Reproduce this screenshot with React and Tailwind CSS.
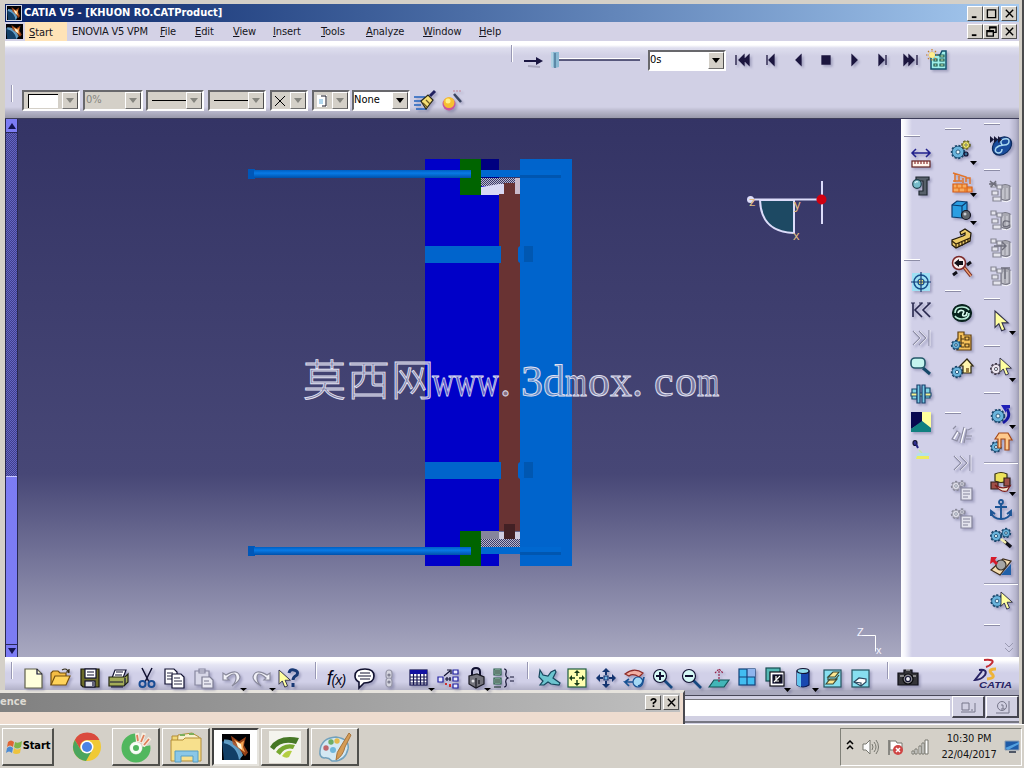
import React from 'react';
import { clsx } from 'clsx';

const menuItems = [
  { label: 'ENOVIA V5 VPM', width: 'w-[88px]', plain: true },
  { label: 'File', width: 'w-[35px]' },
  { label: 'Edit', width: 'w-[38px]' },
  { label: 'View', width: 'w-10' },
  { label: 'Insert', width: 'w-12' },
  { label: 'Tools', width: 'w-[45px]' },
  { label: 'Analyze', width: 'w-[57px]' },
  { label: 'Window', width: 'w-14' },
  { label: 'Help', width: 'w-8' },
];

/* ---------- Small drawing helpers ---------- */

const Icon = ({ children, flat, arrow }) => (
  <svg
    viewBox="0 0 28 28"
    className={clsx('w-7 h-7 shrink-0 overflow-visible', !flat && 'drop-shadow-[2px_2px_1px_rgba(60,60,110,0.3)]')}
    fill="none"
    stroke="#101030"
    strokeWidth="1.2"
  >
    {children}
    {arrow && <path d={arrow === 'low' ? 'M22 24h7l-3.5 3z' : 'M22 24h7l-3.5 4z'} fill="#000" stroke="none" />}
  </svg>
);

const Gear = ({ x, y, r, fill = '#6ab4dc', ink = '#17456a' }) => (
  <g>
    <circle cx={x} cy={y} r={r} stroke={ink} strokeWidth="2.4" strokeDasharray="2 1.5" fill={fill} />
    <circle cx={x} cy={y} r={r - 0.2} fill={fill} stroke={ink} strokeWidth="0.7" />
    <circle cx={x} cy={y} r={r / 3} fill="#e6f4fa" stroke={ink} strokeWidth="0.8" />
  </g>
);

const Cursor = ({ x, y, s = 1 }) => (
  <path
    transform={`translate(${x} ${y}) scale(${s})`}
    d="M0 0v15l3.5-3.5L6 18l3-1.2-2.6-6H12z"
    fill="#ffffa0"
    stroke="#30304a"
    strokeWidth="1"
  />
);

const Box = ({ x, y, w, h, fill, ...rest }) => <rect x={x} y={y} width={w} height={h} fill={fill} {...rest} />;

const Earth = ({ className }) => (
  <svg viewBox="0 0 28 28" className={className} preserveAspectRatio="none">
    <rect width="28" height="28" fill="#020205" />
    <path d="M0 8Q14 6 19 28H2z" fill="#123f66" />
    <path d="M2 6Q15 5 21 23L17 28Q15 13 2 10z" fill="#6fb0da" opacity="0.85" />
    <path d="M9 2l8 6 7-5-2 9 4 8-3 4-6-8-6-5z" fill="#b8501c" opacity="0.8" />
    <path d="M12 6l6 4 4-3-1 7 2 6-6-5z" fill="#f5a452" />
    <path d="M14 8l5 3 1 6-4-3z" fill="#fff6d8" />
  </svg>
);

/* ---------- Icons: measure / simulation column ---------- */

const columnOne = [
  { gap: 'h-[25px]' },
  <Icon key="measure">
    <path d="M5 9h18M9 5L5 9l4 4M19 5l4 4-4 4" stroke="#20208c" strokeWidth="1.5" />
    <Box x="5" y="17" w="18" h="6" fill="#fff4ec" stroke="#602020" />
    <path d="M8 17v3M11 17v3M14 17v3M17 17v3M20 17v3" stroke="#8a3030" />
  </Icon>,
  <Icon key="caliper">
    <path d="M9 5h13v3h-2v15h-8v-4h4V9H9z" fill="#57606a" stroke="#202830" />
    <circle cx="10" cy="12" r="4.3" fill="#78bccb" stroke="#20404c" />
    <path d="M8 11q1-2 3-1" stroke="#e0f6fa" />
  </Icon>,
  { gap: 'h-[68px]' },
  <Icon key="target">
    <Box x="5" y="5" w="18" h="18" fill="#9fe0f4" stroke="none" />
    <circle cx="14" cy="14" r="7" stroke="#18508c" strokeWidth="1.5" />
    <circle cx="14" cy="14" r="3" stroke="#18508c" fill="#fff27a" />
    <path d="M14 4v20M4 14h20" stroke="#143870" />
  </Icon>,
  <Icon key="first">
    <path d="M6 7v14M15 7l-7 7 7 7M23 7l-7 7 7 7" stroke="#26264c" strokeWidth="1.6" />
    <path d="M4 7h4M12 7h4M20 7h4" stroke="#26264c" />
  </Icon>,
  <Icon key="last">
    <path d="M6 7l7 7-7 7M12 7l7 7-7 7M22 6v16" stroke="#8d8da6" strokeWidth="1.3" />
    <path d="M7 7l7 7-7 7M13 7l7 7-7 7M23 6v16" stroke="#fff" strokeWidth="0.6" />
  </Icon>,
  <Icon key="magnify">
    <path d="M16 16l7 6" stroke="#154868" strokeWidth="3" />
    <rect x="4" y="6" width="14" height="10" rx="4" fill="#c4f4ee" stroke="#24586a" strokeWidth="1.6" />
  </Icon>,
  <Icon key="section">
    <path d="M5 9h5v10H5zM18 8h5v10h-5z" fill="#80d4e4" stroke="#164a6c" />
    <path d="M4 13h20v3H4z" fill="#f5f38e" stroke="#245078" />
    <path d="M10 5h3v18h-3zM15 5h3v18h-3z" fill="#79c9e4" stroke="#17406c" />
  </Icon>,
  <Icon key="colors">
    <path d="M4 4h11v10L4 21z" fill="#080850" stroke="none" />
    <path d="M15 4h9v16l-9-7z" fill="#ffff9c" stroke="none" />
    <path d="M4 21l11-8 9 7v4H4z" fill="#108080" stroke="none" />
  </Icon>,
  <Icon key="light" flat>
    <ellipse cx="8" cy="7" rx="2" ry="2.500" fill="#303090" />
    <path d="M9 8l2 4" stroke="#202080" strokeWidth="2" />
    <path d="M12 14l3 3" stroke="#c6e8a0" />
    <path d="M11 17h12l-3 5H8z" fill="#b4e0ec" stroke="none" />
    <path d="M10 20h12v3H9z" fill="#ecec62" stroke="none" />
  </Icon>,
];

/* ---------- Icons: assembly column ---------- */

const GreyGears = () => (
  <g>
    <Gear x="8" y="9" r="4" fill="#dcdce6" ink="#8a8a9a" />
    <Gear x="14" y="7" r="2.500" fill="#dcdce6" ink="#8a8a9a" />
    <path d="M13 11h11v12H13z" fill="#e4e4ee" stroke="#84849a" />
    <path d="M15 14h7M15 17h7M15 20h5" stroke="#84849a" />
  </g>
);

const columnTwo = [
  { gap: 'h-[18px]' },
  <Icon key="constraint" arrow>
    <Gear x="10" y="15" r="6" />
    <Gear x="18" y="8" r="3.600" fill="#f6ef70" ink="#5d5a20" />
    <circle cx="18" cy="17" r="2" fill="#386c94" />
  </Icon>,
  { gap: 'h-1', bare: true },
  <Icon key="bricks" arrow>
    <path d="M5 15h14v8H5zM19 18h5v5h-5z" fill="#f6ab60" stroke="#d65a14" />
    <path d="M5 19h19M9 15v4M14 15v4M11 19v4M17 19v4" stroke="#e2701c" />
    <path d="M5 4l13 4v5M7 5v8M11 7v5M15 9v5M5 12h9M18 9h4v6" stroke="#e2742a" strokeWidth="1.500" />
  </Icon>,
  <Icon key="cube" arrow>
    <path d="M4 8l5-4 10 1v13l-5 3-10-1z" fill="#2b9ee2" stroke="#0c3c70" />
    <path d="M4 8l10 1v12M14 9l5-4" stroke="#0c3c70" />
    <circle cx="18" cy="18" r="4.500" fill="#60666c" stroke="#151520" />
    <circle cx="17" cy="17" r="1.500" fill="#c8ccd2" stroke="none" />
  </Icon>,
  <Icon key="clamp">
    <path d="M12 7l5-3 6 4-1 8-14 7-4-3v-5l11-4 2-1v-2l-4 2z" fill="#ecca68" stroke="#201808" />
    <path d="M4 16l4 3v4M8 19l14-6M11 18v4M14 17v4M17 15v4M20 14v3" stroke="#302008" />
  </Icon>,
  <Icon key="analyse">
    <path d="M15 13l8 10" stroke="#7c2c20" strokeWidth="3.500" />
    <path d="M15 13l8 10" stroke="#f0a070" strokeWidth="1.300" />
    <circle cx="11" cy="10" r="6.500" fill="#f8ecec" stroke="#7b2828" strokeWidth="1.500" />
    <path d="M6 10l5-4v2h4v4h-4v2z" fill="#101018" stroke="none" />
    <path d="M5 22l4-3M19 12l4-3" stroke="#101018" strokeWidth="3" />
  </Icon>,
  { gap: 'h-[18px]' },
  <Icon key="swirl">
    <ellipse cx="14" cy="14" rx="9.500" ry="8.500" fill="#08241e" stroke="#08201c" />
    <path d="M7 14q0-6 7-6 5 0 7 3" stroke="#b9ecd8" strokeWidth="1.700" />
    <path d="M21 14q0 6-7 6-5 0-7-3" stroke="#b9ecd8" strokeWidth="1.700" />
    <path d="M10 14q1-3 4-2.500t1 3q-1 2.500 1 2.500 3 0 3-4" stroke="#d9fbee" strokeWidth="1.700" />
  </Icon>,
  <Icon key="tree-gear">
    <path d="M10 5h6v3h7v15H9V12h1z" fill="#f4c05a" stroke="#614010" />
    <path d="M13 8v12M13 12h3M13 16h3M13 20h3M17 10h4v3h-4zM17 17h4v3h-4z" stroke="#4d3510" />
    <Gear x="8" y="18" r="4" />
  </Icon>,
  <Icon key="home-gear">
    <Gear x="9" y="17" r="5" />
    <path d="M12 11l7-7 6 7h-2v7h-8v-7z" fill="#fff4ae" stroke="#302810" />
    <path d="M18 13h3v5h-3z" fill="#9a7d40" stroke="none" />
  </Icon>,
  { gap: 'h-[38px]' },
  <Icon key="scene-off">
    <path d="M4 18l5-8 3 3-3 7zM12 22l4-16M19 8l-3 14M20 9l4-2M18 15h6M18 18h5M5 8l3-3" stroke="#8d8da2" />
    <path d="M13 22l4-15M6 18l4-7" stroke="#fff" />
  </Icon>,
  <Icon key="end-off">
    <path d="M6 7l7 7-7 7M12 7l7 7-7 7M22 6v16" stroke="#8d8da6" strokeWidth="1.3" />
    <path d="M7 7l7 7-7 7M13 7l7 7-7 7M23 6v16" stroke="#fff" strokeWidth="0.6" />
  </Icon>,
  <Icon key="report-off"><GreyGears /></Icon>,
  <Icon key="report2-off"><GreyGears /></Icon>,
];

/* ---------- Icons: workbench column ---------- */

const GreyDrum = ({ mark }) => (
  <Icon flat>
    <path d="M14 8q4-3 9 0v13q-4 3-9 0z" fill="#a9a9b2" stroke="#7b7b88" />
    <path d="M16 10v11M20 10v11" stroke="#d4d4dc" />
    <path d="M4 5h5v4H4zM10 7h5v4h-5zM5 13h6v4H5zM6 19h8v4H6z" fill="#e4e4ec" stroke="#868694" />
    <path d={mark} stroke="#6f6f7c" strokeWidth="1.400" />
    <path d="M24 9v13q-4 3-9 1" stroke="#fff" strokeWidth="0.800" />
  </Icon>
);

const Rule = () => (
  <div className="h-px w-[34px] bg-[#9c9cb4] border-b border-white box-content" />
);

const columnThree = [
  { gap: 'h-[13px]' },
  <Icon key="dmu">
    <ellipse cx="15" cy="14" rx="10.500" ry="8" transform="rotate(-40 15 14)" fill="#1a4c9c" stroke="#0d2c60" />
    <path d="M15 13q-3-5 2-6t5 2q0 4-5 4-5 0-8 3-2 4 2 5 4 0 4-4" stroke="#a9d7f0" strokeWidth="1.500" />
    <path d="M3 4l4 3.500L3 11zM7 4l4 3.500L7 11zM11 4l4 3.500-4 3.500z" fill="#181838" stroke="none" />
  </Icon>,
  { gap: 'h-[18px]' },
  <GreyDrum key="d1" mark="M3 3l6 5M9 3L4 9M2 6h7" />,
  <GreyDrum key="d2" mark="M23 16q-7-3-7 2t7 1q2 3-4 4" />,
  <GreyDrum key="d3" mark="M7 12h12M15 8l4 4-4 4" />,
  <GreyDrum key="d4" mark="M14 6h9M18 6v11" />,
  { gap: 'h-[17px]' },
  <Icon key="select" arrow><Cursor x={8} y={4} s={1.1} /></Icon>,
  { gap: 'h-[19px]' },
  <Icon key="gear-select" arrow>
    <Gear x="9" y="15" r="4.800" fill="#ece6f0" ink="#403848" />
    <Cursor x={13} y={4} s={0.95} />
  </Icon>,
  { gap: 'h-[19px]' },
  <Icon key="update" arrow>
    <Gear x="11" y="15" r="6" />
    <path d="M20 8q5 8-4 14" stroke="#1616a0" strokeWidth="2.700" />
    <path d="M14 4h9v3l-4 1 0 4z" fill="#2020b8" stroke="none" />
  </Icon>,
  <Icon key="publish">
    <Gear x="9" y="18" r="4.600" />
    <path d="M8 10l4-6 9 0 4 7h-3v10h-4V10h-4v9h-3v-9z" fill="#ffc98c" stroke="#a44818" />
  </Icon>,
  { rule: true, gap: 'h-[11px]' },
  <Icon key="component" arrow>
    <path d="M8 6q6-3 12 0v7q-6 3-12 0z" fill="#ece25a" stroke="#342e10" />
    <path d="M4 14h7v7H4zM17 10h6v8h-6z" fill="#9e5048" stroke="#33201c" />
    <path d="M8 17q7 5 15 1l-3 5q-6 2-12-6z" fill="#f8e8d0" stroke="#7d1c1c" />
  </Icon>,
  <Icon key="anchor">
    <circle cx="14" cy="6" r="2" stroke="#1d5596" strokeWidth="1.800" />
    <path d="M14 8v15M8 11h12M4 16q2 7 10 7t10-7M4 20v-5l4 3M24 20v-5l-4 3" stroke="#1d5596" strokeWidth="1.900" />
  </Icon>,
  <Icon key="gears-pin">
    <Gear x="9" y="12" r="4.800" />
    <Gear x="19" y="9" r="4" />
    <path d="M17 17l7 6" stroke="#101018" strokeWidth="3.500" />
    <path d="M14 15l5 4" stroke="#f4efb0" strokeWidth="2.400" />
  </Icon>,
  <Icon key="replace">
    <path d="M4 18l12-11 8 2-11 14z" fill="#f4dcb0" stroke="#3c2c18" />
    <circle cx="14" cy="13" r="5" fill="#a5a5a5" stroke="#39332c" />
    <path d="M24 12v11H14z" fill="#2060a8" stroke="none" />
    <path d="M4 5h6l-2 3 3 3-2 2-3-3-3 2z" fill="#d61a2a" stroke="none" />
  </Icon>,
  { rule: true, gap: 'h-[7px]' },
  <Icon key="gear-cursor">
    <Gear x="10" y="14" r="5.500" />
    <Cursor x={14} y={5} s={0.95} />
  </Icon>,
  { gap: 'h-[18px]' },
  <svg key="more" viewBox="0 0 14 14" className="w-[14px] h-[14px] ml-4 mt-2 shrink-0" fill="none" stroke="#9a9ab2">
    <path d="M3 2l4 4 4-4M3 7l4 4 4-4" />
  </svg>,
];

/* ---------- Icons: standard toolbar ---------- */

const View = ({ children }) => (
  <Icon>
    <Box x="5" y="6" w="17" h="17" fill="#87dff0" stroke="#245460" />
    {children}
  </Icon>
);

const standardIcons = [
  <Icon key="new"><path d="M6 5h12l5 5v14H6z" fill="#ffffdc" stroke="#60604c" /><path d="M18 5v5h5" /></Icon>,
  <Icon key="open">
    <path d="M4 21V9l2-2h5l2 2h6v4" fill="#f4bc44" stroke="#745010" />
    <path d="M4 21l4-9h15l-4 9z" fill="#ffd35a" stroke="#745010" />
    <path d="M15 6q5-3 7 3M19 8h3V5" stroke="#302810" />
  </Icon>,
  <Icon key="save">
    <path d="M5 5h18v18H7l-2-2z" fill="#6c6b28" stroke="#18180c" />
    <Box x="9" y="5" w="11" h="9" fill="#fff" />
    <Box x="9" y="17" w="10" h="6" fill="#e0e0e8" />
    <path d="M11 8h7M11 11h7M17 18v4" />
  </Icon>,
  <Icon key="print">
    <path d="M11 6h11l-3 8H8z" fill="#fff" />
    <path d="M5 13h16l3-3v8l-4 4H5z" fill="#a3ab58" stroke="#202410" />
    <path d="M12 8h7M11 11h7M6 18h13M21 14v7M7 23h12" />
  </Icon>,
  <Icon key="cut">
    <path d="M9 4l7 14M19 4l-7 14" strokeWidth="1.500" />
    <circle cx="9.500" cy="20" r="3" stroke="#184c94" strokeWidth="2" />
    <circle cx="18.500" cy="20" r="3" stroke="#184c94" strokeWidth="2" />
  </Icon>,
  <Icon key="copy">
    <path d="M4 5h9l3 3v12H4z" fill="#fff" />
    <path d="M6 9h6M6 12h5M6 15h5" strokeWidth="0.900" />
    <path d="M11 10h9l3 3v11H11z" fill="#fff" />
    <path d="M13 14h6M13 17h8M13 20h8" strokeWidth="0.900" />
  </Icon>,
  <Icon key="paste">
    <path d="M5 7h14v14H5zM9 5h6v4H9z" stroke="#8888a0" fill="#d8d8e8" />
    <path d="M12 13h8l3 3v8H12z" fill="#e9e9f2" stroke="#7c7c92" />
    <path d="M14 17h5M14 20h7" stroke="#7c7c92" />
  </Icon>,
  <Icon key="undo" arrow="low">
    <path d="M5 9v7h6l-2-2q9-8 9 0 0 4-4 8 8-5 8-9-2-9-14-2z" fill="#f2f2f8" stroke="#8a8a9c" />
  </Icon>,
  <Icon key="redo" arrow="low">
    <path d="M23 9v7h-6l2-2q-9-8-9 0 0 4 4 8-8-5-8-9 2-9 14-2z" fill="#f2f2f8" stroke="#8a8a9c" />
  </Icon>,
  <Icon key="what">
    <Cursor x={4} y={6} s={0.95} />
    <path d="M14 9q1-4 5-3 5 1 3 5-4 2-4 5M18 19v4" stroke="#183874" strokeWidth="3" />
  </Icon>,
];

const knowledgeIcons = [
  <span key="fx" className="w-7 shrink-0 text-center font-['Liberation_Sans',sans-serif] italic tracking-tighter text-[#08081c]">
    <span className="text-[20px]">f</span><span className="text-[14px]">(x)</span>
  </span>,
  <Icon key="comment">
    <path d="M5 12q0-7 10-7 9 0 9 7t-10 7l-5 5v-6q-4-2-4-6z" fill="#fff" strokeWidth="1.600" />
    <path d="M10 9h10M8 12h13M10 15h10" />
  </Icon>,
  <Icon key="traffic">
    <rect x="8" y="6" width="6" height="9" rx="3" fill="#d6d6e0" stroke="#9696a8" />
    <rect x="8" y="14" width="6" height="9" rx="3" fill="#d6d6e0" stroke="#9696a8" />
    <circle cx="11" cy="11" r="1" stroke="#77778a" /><circle cx="11" cy="18" r="1" stroke="#77778a" />
  </Icon>,
  <Icon key="table" arrow="low">
    <Box x="4" y="6" w="17" h="15" fill="#fff" stroke="#141450" />
    <Box x="4" y="6" w="17" h="4" fill="#1212a0" stroke="none" />
    <path d="M7.500 10v11M11 10v11M14.500 10v11M18 10v11M4 13h17M4 16h17M4 19h17" stroke="#141450" />
  </Icon>,
  <Icon key="links">
    <path d="M4 13h5v5H4zM19 6h5v4h-5zM19 13h5v4h-5zM19 20h5v4h-5z" stroke="#2020a0" fill="#ececff" />
    <path d="M10 12l6-5M13 6h4v4M11 15h6M13 13v4M16 13v4" />
    <path d="M12 19v2M16 20v3" stroke="#d03030" strokeWidth="2" />
  </Icon>,
  <Icon key="lock" arrow="low">
    <path d="M10 12V8q0-4 4-4t4 4v4" strokeWidth="2" />
    <path d="M7 12l8-2 7 3v7l-8 4-7-4z" fill="#74747c" stroke="#181820" />
    <path d="M14 14v10M17 16v4" stroke="#181820" /><circle cx="11" cy="17" r="1.500" fill="#e0e0e4" stroke="none" />
  </Icon>,
  <Icon key="equiv">
    <path d="M4 5h7v6H4zM4 14h7v6H4z" fill="#b6d6c8" stroke="#285c48" />
    <path d="M5 7h5M5 9h5M5 16h5M5 18h5M4 23h7" stroke="#102820" />
    <path d="M14 5q3 0 2 4t2 5q-3 1-2 5t-2 4M20 13h4M20 17h4" />
  </Icon>,
];

const viewIcons = [
  <Icon key="fly">
    <path d="M5 6l3 5 5 1 3-4 4-2 1 2-3 6 7 5-1 2-8-1-3-2-4 3-4 0 3-4-4-4z" fill="#6cc4cf" stroke="#15465c" />
  </Icon>,
  <Icon key="fit">
    <Box x="5" y="5" w="18" h="18" fill="#ffffb0" stroke="#1e5c40" />
    <path d="M14 7v5M14 16v5M7 14h5M16 14h5" stroke="#18401c" strokeWidth="1.500" />
    <path d="M14 6l-3 3h6zM14 22l-3-3h6zM6 14l3-3v6zM22 14l-3-3v6z" fill="#183c18" stroke="none" />
  </Icon>,
  <Icon key="pan">
    <path d="M14 6v5M14 17v5M6 14h5M17 14h5" stroke="#143470" strokeWidth="2" />
    <path d="M12 12h4v4h-4z" stroke="#143470" fill="#78b4e4" />
    <path d="M14 4l-4 4h8zM14 24l-4-4h8zM4 14l4-4v8zM24 14l-4-4v8z" fill="#143470" stroke="none" />
  </Icon>,
  <Icon key="rotate">
    <path d="M5 10q9-7 18-1l-4 4q-6-4-10-1z" fill="#f3afa2" stroke="#8e2c28" />
    <circle cx="18" cy="18" r="5" fill="#a4d8f4" stroke="#185294" />
    <path d="M13 18H5l4 4M5 18l4-3M18 22q5-1 6-9" stroke="#185294" strokeWidth="1.700" />
  </Icon>,
  <Icon key="zoomin">
    <path d="M16 16l8 8" stroke="#164880" strokeWidth="2.700" />
    <circle cx="12" cy="12" r="6.500" fill="#d6faf6" /><path d="M8 12h8M12 8v8" strokeWidth="2" />
  </Icon>,
  <Icon key="zoomout">
    <path d="M16 16l8 8" stroke="#164880" strokeWidth="2.700" />
    <circle cx="12" cy="12" r="6.500" fill="#d6faf6" /><path d="M8 12h8" strokeWidth="2" />
  </Icon>,
  <Icon key="normal">
    <path d="M4 23l5-7h15l-5 7z" fill="#42b6b8" stroke="#135456" />
    <path d="M14 18V6M10 9l4-4 4 4" stroke="#94244a" strokeDasharray="2 1" />
  </Icon>,
  <Icon key="multi">
    <Box x="5" y="5" w="16" h="16" fill="#42bdf1" stroke="#15427b" />
    <path d="M13 5h8v8h-8z" fill="#8fb4ed" stroke="none" /><path d="M13 5v16M5 13h16" stroke="#15427b" />
  </Icon>,
  <Icon key="quick" arrow>
    <Box x="4" y="4" w="14" h="13" fill="#54b8b4" stroke="#174c50" />
    <Box x="8" y="8" w="14" h="14" fill="#fff" stroke="#101018" />
    <Box x="11" y="11" w="9" h="8" fill="#101018" /><path d="M12 18l6-6M14 12v5M17 17h-4" stroke="#fff" />
  </Icon>,
  <Icon key="shade" arrow>
    <path d="M7 7v14q6 4 12 0V7z" fill="#1848b0" stroke="#0b1b52" />
    <path d="M7 7v14q3 2 4 2V8z" fill="#64c5ed" stroke="none" />
    <ellipse cx="13" cy="7" rx="6" ry="2.500" fill="#90ddec" />
  </Icon>,
  <View key="hide">
    <path d="M9 13l5-5h6l-4 5zM7 20l4-5h7l-4 5z" fill="#ffe791" stroke="#3c4730" />
    <path d="M9 13v3h7l4-5" stroke="#3c4730" />
  </View>,
  <View key="swap">
    <path d="M7 18l5-4 7 1v3l-5 4z" fill="#fff" stroke="#2b4860" />
    <path d="M7 18l7 1v3" stroke="#2b4860" />
  </View>,
];

const playback = [
  ['first', 'M8 9v10M16 9l-5 5 5 5zM21 9l-5 5 5 5z'],
  ['previous', 'M11 9v10M18 9l-5 5 5 5z'],
  ['back', 'M17 9l-5 5 5 5z'],
  ['stop', 'M10 10h8v8h-8z'],
  ['play', 'M12 9l5 5-5 5z'],
  ['next', 'M11 9l5 5-5 5zM18 9v10'],
  ['final', 'M8 9l5 5-5 5zM13 9l5 5-5 5zM21 9v10'],
];

/* ---------- Window chrome ---------- */

const SmallButton = ({ children }) => (
  <div className="w-4 h-[15px] shrink-0 bg-[#d4d0c8] border border-t-white border-l-white border-r-[#505050] border-b-[#505050] flex items-center justify-center">
    <svg viewBox="0 0 12 12" className="w-[11px] h-[11px]" fill="none" stroke="#000" strokeWidth="1.500">{children}</svg>
  </div>
);

const Grip = ({ className }) => (
  <div className={clsx('w-[2px] h-[17px] shrink-0 bg-[#9898b4] border-r border-white', className)} />
);

const Combo = ({ className, children, light }) => (
  <div
    className={clsx(
      'h-[21px] shrink-0 flex items-stretch border-2 border-t-[#68686c] border-l-[#68686c] border-r-white border-b-white',
      light ? 'bg-white' : 'bg-[#d4d0c8]',
      className
    )}
  >
    <div className="flex-1 min-w-0 flex items-center">{children}</div>
    <div className="w-4 bg-[#d4d0c8] border border-t-white border-l-white border-b-[#707070] border-r-[#505050] flex items-center justify-center">
      <svg viewBox="0 0 8 5" className="w-2 h-[5px]"><path d="M0 0h8L4 5z" fill={light ? '#000' : '#85857f'} /></svg>
    </div>
  </div>
);

const TitleBar = () => (
  <div className="h-[18px] shrink-0 flex items-center px-px bg-linear-to-r from-[#0b2469] to-[#a6caf0]">
    <Earth className="w-4 h-4 border border-white/80" />
    <span className="ml-[2px] flex-1 whitespace-nowrap text-white font-bold text-[11px]">
      CATIA V5 - [KHUON RO.CATProduct]
    </span>
    <SmallButton><path d="M2 10h5" strokeWidth="2" /></SmallButton>
    <SmallButton><path d="M1.500 2v8.500h9V2zM1 2h10" /></SmallButton>
    <div className="w-[2px]" />
    <SmallButton><path d="M2 2l8 8M10 2l-8 8" /></SmallButton>
    <div className="w-px" />
  </div>
);

const MenuBar = () => (
  <div className="h-[19px] shrink-0 flex items-center px-px bg-[#d4d2e6] text-[11px] tracking-[-0.1px] text-[#151520]">
    <Earth className="w-[17px] h-[15px]" />
    <div className="ml-[2px] w-[42px] h-full bg-[#ffe3b7] pl-1 pt-px leading-[19px]"><u>S</u>tart</div>
    <div className="w-[5px]" />
    {menuItems.map((item) => (
      <div key={item.label} className={clsx('shrink-0 whitespace-nowrap pt-[2px]', item.width)}>
        {item.plain ? <span className="tracking-[-0.2px]">{item.label}</span> : <><u>{item.label[0]}</u>{item.label.slice(1)}</>}
      </div>
    ))}
    <div className="flex-1" />
    <SmallButton><path d="M2 10h5" strokeWidth="2" /></SmallButton>
    <SmallButton><path d="M4 4V1h7v6H8M1 5h7v6H1zM4 2h7M1 6h7" /></SmallButton>
    <div className="w-[2px]" />
    <SmallButton><path d="M2 2l8 8M10 2l-8 8" /></SmallButton>
    <div className="w-px" />
  </div>
);

const TopToolbars = () => (
  <div className="h-[78px] shrink-0 flex flex-col border-b border-[#3c3c58] bg-[linear-gradient(to_bottom,#fff_0,#fff_4px,#dedeee_7px,#d1d0e5_15px,#d1d0e5_66px,#b9b8cc_70px,#9999aa_77px)]">
    {/* Simulation player */}
    <div className="h-[38px] shrink-0 flex items-center pl-[506px]">
      <Grip className="mb-[14px]" />
      <svg viewBox="0 0 130 28" className="w-[130px] h-7 ml-[10px] shrink-0" fill="none">
        <path d="M1 15h14" stroke="#1b1742" strokeWidth="2" /><path d="M13 11l7 4-7 4z" fill="#1b1742" />
        <path d="M5 20l12 1" stroke="#aaa9bf" strokeWidth="2" />
        <path d="M35 13h82" stroke="#fff" strokeWidth="2" /><path d="M35 14h82" stroke="#2e2f58" strokeWidth="1.500" />
        <path d="M28 6h8v15l-4 1-4-1z" fill="#8ab9d3" /><path d="M32 7v15" stroke="#315b7c" /><path d="M29 6v15" stroke="#d7ebf4" />
      </svg>
      <Combo className="w-[78px] -ml-[5px]" light><span className="text-[11px]">0s</span></Combo>
      <div className="w-[2px]" />
      {playback.map(([name, d]) => (
        <Icon key={name}><path d={d} fill="#1c163f" stroke="#1c163f" strokeWidth="1.300" /></Icon>
      ))}
      <Icon>
        <path d="M7 9h9l2-4h4v18H7z" fill="#9eefe9" stroke="#12516d" strokeWidth="1.500" />
        <path d="M10 13h3v2h-3zM16 9h4v2h-4zM16 13h4v2h-4zM10 18h3v2h-3zM16 18h4v2h-4z" fill="#e2ffc0" stroke="#1a5a54" />
        <path d="M8 3v12M2 9h12M4 5l8 8M12 5l-8 8" stroke="#c57c24" strokeDasharray="1.500 1" />
        <circle cx="8" cy="9" r="3" fill="#ffee8c" stroke="none" />
      </Icon>
    </div>
    {/* Graphic properties */}
    <div className="h-[38px] shrink-0 flex items-start pt-[11px] pl-[6px]">
      <Grip className="-mt-[5px]" />
      <div className="w-[9px]" />
      <Combo className="w-[58px]"><div className="ml-1 w-[30px] h-[14px] bg-white border-t border-l border-black" /></Combo>
      <Combo className="w-[60px] ml-[3px]"><span className="pl-px text-[11px] text-[#85857f]">0%</span></Combo>
      <Combo className="w-[58px] ml-[3px]"><div className="ml-1 w-[34px] h-px bg-black" /></Combo>
      <Combo className="w-[58px] ml-1"><div className="ml-1 w-[34px] h-px bg-black" /></Combo>
      <Combo className="w-[38px] ml-1">
        <svg viewBox="0 0 12 12" className="w-3 h-3 ml-[2px]"><path d="M1 1l10 10M11 1L1 11" stroke="#000" /></svg>
      </Combo>
      <Combo className="w-[38px] ml-1">
        <svg viewBox="0 0 12 12" className="w-3 h-3 ml-[3px]">
          <rect width="10" height="12" fill="#fff" /><path d="M4 1h5v10H5" fill="none" stroke="#151520" /><path d="M2 4h4v5H2z" fill="#b2d7ed" />
        </svg>
      </Combo>
      <Combo className="w-[58px] ml-[2px]" light><span className="text-[11px]">None</span></Combo>
      <div className="flex -mt-[3px] ml-[2px]">
        <Icon>
          <path d="M2 10h11M2 14h9M2 18h7M4 22h11" stroke="#2162be" strokeWidth="1.400" />
          <path d="M9 14l7-6 5 5-7 9z" fill="#f6df75" stroke="#292818" />
          <path d="M11 16l4 4M14 13l4 4" stroke="#6b5920" /><path d="M18 9l5-5" stroke="#212160" strokeWidth="3" />
        </Icon>
        <Icon>
          <circle cx="9" cy="17" r="6.500" fill="#cb559b" stroke="none" /><circle cx="9" cy="15.500" r="5.500" fill="#f6bf32" stroke="none" />
          <circle cx="8" cy="14" r="2.500" fill="#fff08a" stroke="none" />
          <path d="M14 7l7 8" stroke="#384360" strokeWidth="2.500" /><path d="M13 4h8" stroke="#c48495" strokeDasharray="2 1" />
        </Icon>
      </div>
    </div>
  </div>
);

const ScrollTrack = () => (
  <div className="w-[13px] shrink-0 flex flex-col border-x border-[#282850] bg-[#7c7cf4]">
    <div className="h-[14px] border-b border-[#282858] flex items-center justify-center">
      <svg viewBox="0 0 8 8" className="w-2 h-2"><path d="M0 7h8L4 1z" fill="#141450" /></svg>
    </div>
    <div className="h-[343px] bg-[repeating-conic-gradient(#6464c4_0_25%,#40408a_0_50%)] bg-[length:2px_2px]" />
    <div className="flex-1 border-t border-[#c8c8ff]" />
    <div className="h-[13px] border-t border-[#282858] flex items-center justify-center">
      <svg viewBox="0 0 8 8" className="w-2 h-2"><path d="M0 1h8L4 7z" fill="#141450" /></svg>
    </div>
  </div>
);

const Rod = ({ y }) => (
  <g>
    <rect x="248" y={y - 5} width="7" height="10" fill="#0057b8" />
    <rect x="254" y={y - 4} width="217" height="8" fill="url(#rod)" />
    <rect x="481" y={y - 4} width="80" height="7" fill="#0068d0" />
    <rect x="520" y={y + 1} width="41" height="3" fill="#0056b0" />
  </g>
);

const Viewport = () => (
  <svg viewBox="18 119 883 538" className="w-[883px] h-[538px] shrink-0">
    <defs>
      <linearGradient id="backdrop" x1="0" y1="0" x2="0" y2="1">
        <stop offset="0" stopColor="#343465" />
        <stop offset="0.66" stopColor="#474776" />
        <stop offset="1" stopColor="#a9a9c1" />
      </linearGradient>
      <linearGradient id="rod" x1="0" y1="0" x2="0" y2="1">
        <stop offset="0" stopColor="#005fc2" /><stop offset="0.4" stopColor="#087ae6" /><stop offset="1" stopColor="#0050aa" />
      </linearGradient>
      <pattern id="dither" width="2" height="2" patternUnits="userSpaceOnUse">
        <rect width="2" height="2" fill="#b9b9ce" /><rect width="1" height="1" fill="#3b3868" /><rect x="1" y="1" width="1" height="1" fill="#3b3868" />
      </pattern>
    </defs>
    <rect x="18" y="119" width="883" height="538" fill="url(#backdrop)" />

    {/* Mould halves */}
    <rect x="425" y="159" width="74" height="407" fill="#0000c8" />
    <rect x="520" y="159" width="52" height="407" fill="#0064cc" />
    <rect x="481" y="159" width="18" height="20" fill="#000080" />
    <rect x="499" y="180" width="21" height="351" fill="#693333" />
    <rect x="425" y="246" width="76" height="17" fill="#0064cc" />
    <rect x="425" y="462" width="76" height="17" fill="#0064cc" />
    <rect x="518" y="246" width="6" height="17" rx="3" fill="#0064cc" />
    <rect x="518" y="462" width="6" height="17" rx="3" fill="#0064cc" />
    <rect x="524" y="246" width="9" height="16" fill="#0057b1" />
    <rect x="524" y="462" width="9" height="16" fill="#0057b1" />

    {/* Parting gap */}
    <rect x="481" y="178" width="39" height="8" fill="url(#dither)" />
    <path d="M481 187l18-3h5v10h-5v1h-18z" fill="#d8d8f4" />
    <path d="M504 183h11v5h5v8h-21v-2h5z" fill="#693333" />
    <path d="M515 178h5v16h-5z" fill="#c9bbcb" />
    <rect x="481" y="531" width="18" height="8" fill="#85859c" />
    <path d="M499 532h5v7h-5zM515 532h5v7h-5z" fill="#cfcce0" />
    <rect x="481" y="539" width="39" height="8" fill="url(#dither)" />
    <path d="M504 524h11v15h-11z" fill="#422024" />
    <rect x="460" y="159" width="21" height="36" fill="#006400" />
    <rect x="460" y="531" width="21" height="35" fill="#006400" />
    <Rod y={174} />
    <Rod y={551} />

    {/* Compass */}
    <path d="M760 200q1 32 34 33v-33z" fill="#1d4963" stroke="#dcdcfa" strokeWidth="2" />
    <path d="M750 199.500h72M822 181v43" stroke="#dcdcfa" strokeWidth="2" />
    <circle cx="750.500" cy="199.500" r="3.500" fill="#dcdcfa" />
    <circle cx="821.500" cy="199.500" r="5" fill="#cf0010" />
    <g fill="#e0bd82" fontFamily="Liberation Sans, sans-serif" fontSize="13">
      <text x="749" y="206">z</text>
      <text x="794" y="209">y</text>
      <text x="793" y="240">x</text>
    </g>

    {/* Axis triad */}
    <path d="M862 635.500h13.500v16" fill="none" stroke="#fff" />
    <g fill="#f4f4ff" fontFamily="Liberation Sans, sans-serif" fontSize="11">
      <text x="857" y="636">Z</text>
      <text x="876" y="654">x</text>
    </g>

    {/* Watermark */}
    <g fontSize="44" fontFamily="Liberation Serif, serif" fill="#a6a6c6" fillOpacity="0.55" stroke="#e2e2f2" strokeWidth="0.9">
      <text x="303" y="396" fontSize="43" fontWeight="300" letterSpacing="1" fontFamily="Noto Sans CJK SC, sans-serif">莫西网</text>
      <text transform="translate(432 396) scale(0.7 1)">www</text>
      <text x="500" y="396">.</text>
      <text x="521" y="396">3d</text>
      <text transform="translate(565 396) scale(0.64 1)">m</text>
      <text x="588" y="396">ox</text>
      <text x="632" y="396">.</text>
      <text x="654" y="396">c</text>
      <text x="675" y="396">o</text>
      <text transform="translate(697 396) scale(0.65 1)">m</text>
    </g>
  </svg>
);

const ToolColumn = ({ items, className }) => (
  <div className={clsx('w-[34px] shrink-0 flex flex-col items-center', className)}>
    {items.map((item, index) => {
      if (!item.gap) return item;
      if (item.bare) return <div key={index} className={clsx('shrink-0', item.gap)} />;
      return (
        <div key={index} className={clsx('w-full shrink-0 flex flex-col', item.gap, item.rule ? 'justify-center items-center' : 'justify-end pb-[7px]')}>
          {item.rule ? <Rule /> : <div className="h-[2px] w-4 shrink-0 bg-[#8c8ca6] border-t border-white" />}
        </div>
      );
    })}
  </div>
);

const RightPanel = () => (
  <div className="w-[118px] h-[538px] shrink-0 overflow-hidden flex bg-[linear-gradient(to_right,#fff_0,#f5f5fc_4px,#d1d0e8_11px,#d1d0e8_108px,#b5b4cc_115px,#9a99b0_118px)]">
    <ToolColumn items={columnOne} className="ml-[3px]" />
    <ToolColumn items={columnTwo} className="ml-[7px]" />
    <ToolColumn items={columnThree} className="ml-[5px]" />
  </div>
);

const BottomToolbar = () => (
  <div className="h-[33px] shrink-0 flex items-start pl-[6px] bg-[linear-gradient(to_bottom,#fff_0,#fff_3px,#e4e4f3_8px,#d1d0e8_16px,#d1d0e8_25px,#b2b1c8_33px)]">
    <Grip className="mt-[5px]" />
    <div className="w-[6px] shrink-0" />
    <div className="w-[284px] shrink-0 flex justify-between mt-[7px]">{standardIcons}</div>
    <div className="w-3 shrink-0" />
    <Grip className="mt-[5px]" />
    <div className="w-[5px] shrink-0" />
    <div className="w-[194px] shrink-0 flex justify-between items-center h-7 mt-[7px]">{knowledgeIcons}</div>
    <div className="w-[11px] shrink-0" />
    <Grip className="mt-[5px]" />
    <div className="w-[6px] shrink-0" />
    <div className="w-[340px] shrink-0 flex justify-between mt-[7px]">{viewIcons}</div>
    <div className="w-3 shrink-0" />
    <Grip className="mt-[5px]" />
    <div className="w-[5px] shrink-0" />
    <div className="mt-[7px] w-7">
      <Icon>
        <path d="M4 9h6V6h8v3h6v12H4z" fill="#343438" stroke="#101018" />
        <circle cx="14" cy="15" r="5" fill="#89898f" stroke="#08080c" /><circle cx="14" cy="15" r="2.500" fill="#ededf0" />
        <path d="M6 12h4M19 12h3M12 6h4" stroke="#ddd" />
      </Icon>
    </div>
    <svg viewBox="0 0 42 32" className="w-[42px] h-8 ml-[50px] shrink-0" fill="none">
      <path d="M12 3q11-1 8 3-2 3-6 4" stroke="#c32b34" strokeWidth="2" />
      <path d="M7 13q9-1 6 5-4 5-10 5l7-9" stroke="#292465" strokeWidth="2" />
      <path d="M24 12q-8 0-5 4 6 5-4 6" stroke="#eeb43a" strokeWidth="3" />
      <text x="7" y="31" textLength="33" lengthAdjust="spacingAndGlyphs" fill="#292465" fontFamily="Liberation Sans, sans-serif" fontSize="9" fontWeight="bold" fontStyle="italic">CATIA</text>
    </svg>
  </div>
);

const StatusRow = () => (
  <div className="h-[34px] shrink-0 flex bg-[#d1d0e2]">
    {/* Parked dialog */}
    <div className="w-[685px] shrink-0 flex flex-col bg-[#eedccf] border-t-[3px] border-[#e6e3dd] border-r-2 border-r-[#4a4a50]">
      <div className="h-[19px] mr-[3px] flex items-center bg-linear-to-r from-[#808080] to-[#c0c0c0]">
        <span className="flex-1 text-[11px] font-bold text-[#dedbd4]">ence</span>
        <SmallButton><path d="M3.500 4q0-2 2.500-2t2.500 2Q8.500 5 6 6.500V8M6 9v2" strokeWidth="1.800" /></SmallButton>
        <div className="w-[2px]" />
        <SmallButton><path d="M2 2l8 8M10 2l-8 8" /></SmallButton>
        <div className="w-px" />
      </div>
    </div>
    {/* Command line */}
    <div className="flex-1 flex flex-col">
      <div className="h-[5px] bg-[#aaaabe]" />
      <div className="h-[28px] flex border-t border-[#474758] border-b-2 border-b-[#777783]">
        <div className="w-[265px] mt-[3px] h-[17px] bg-white border-t border-[#76767c]" />
        <div className="ml-[2px] w-[33px] h-[22px] bg-[#d1d0e2] border border-t-white border-l-white border-r-2 border-b-2 border-r-[#454550] border-b-[#454550] flex items-center justify-center">
          <svg viewBox="0 0 16 14" className="w-4 h-[14px]" fill="none" stroke="#77778a"><path d="M2 3h7v7H2zM11 10h2M15 3v9H1" /></svg>
        </div>
        <div className="ml-px w-[33px] h-[22px] bg-[#d1d0e2] border border-t-white border-l-white border-r-2 border-b-2 border-r-[#454550] border-b-[#454550] flex items-center justify-center">
          <svg viewBox="0 0 16 14" className="w-4 h-[14px]" fill="none" stroke="#77778a"><circle cx="8" cy="6" r="4.500" /><path d="M7 5h2v4M7 9h4M15 1v12H2" /></svg>
        </div>
      </div>
    </div>
  </div>
);

/* ---------- Taskbar ---------- */

const TaskButton = ({ active, className, children }) => (
  <div
    className={clsx(
      'h-[38px] shrink-0 flex items-center justify-center border',
      active
        ? 'bg-white border-2 border-t-[#404040] border-l-[#404040] border-r-[#e6e4de] border-b-[#e6e4de]'
        : 'bg-[#d4d0c8] border-t-white border-l-white border-r-2 border-b-2 border-r-[#50504c] border-b-[#50504c]',
      className
    )}
  >
    {children}
  </div>
);

const Taskbar = () => (
  <div className="h-11 shrink-0 flex items-start pt-[3px] pl-[2px] bg-[#d4d0c8] border-t border-white">
    <TaskButton className="w-[52px]">
      <svg viewBox="0 0 18 18" className="w-[18px] h-[18px] shrink-0">
        <path d="M3 4q3-3 6 0L8 9q-3-3-6 0z" fill="#df6534" /><path d="M10 4q3 2 7-1l-1 6q-4 3-7 0z" fill="#7eb64a" />
        <path d="M2 10q3-3 6 0l-1 5q-3-3-6 0z" fill="#4b8ad2" /><path d="M9 10q3 3 7 0l-1 5q-4 2-7 0z" fill="#edc33e" />
      </svg>
      <span className="text-[11px] font-bold tracking-[-0.1px]">Start</span>
    </TaskButton>
    <svg viewBox="0 0 32 32" className="w-8 h-8 ml-[17px] mt-[3px] shrink-0">
      <circle cx="16" cy="16" r="14" fill="#f0c934" />
      <path d="M3.800 9A14 14 0 0 1 28.500 9H16a7 7 0 0 0-6 10.500z" fill="#da4b3f" />
      <path d="M3.800 9A14 14 0 0 0 15 30l6-10.500a7 7 0 0 1-11.500-1z" fill="#4ba55e" />
      <circle cx="16" cy="16" r="6.500" fill="#fff" /><circle cx="16" cy="16" r="5" fill="#4a84e4" />
    </svg>
    <TaskButton className="w-12 ml-[9px]">
      <svg viewBox="0 0 34 34" className="w-[34px] h-[34px]">
        <circle cx="17" cy="18" r="10.500" fill="none" stroke="#51b75e" strokeWidth="8" />
        <path d="M17 18L17 0l16 2v13z" fill="#d4d0c8" />
        <path d="M19 12l-1-9M22 13l3-10M24 16l7-8" stroke="#f6eee0" strokeWidth="4" />
        <path d="M19 11l-1-6M22 12l3-7M25 15l5-6" stroke="#df7f5b" strokeWidth="1.800" />
        <circle cx="17" cy="18" r="4.500" fill="#51b75e" stroke="#f7fff6" strokeWidth="3" />
      </svg>
    </TaskButton>
    <TaskButton className="w-12 ml-[2px]">
      <svg viewBox="0 0 34 34" className="w-[34px] h-[34px]" stroke="#b28d36">
        <path d="M3 6h10l2 3h15v21H3z" fill="#f2d878" /><path d="M9 5l14-2 7 4v12H8z" fill="#f8f0cc" />
        <path d="M2 10h12l2-2h16v23H2z" fill="#f7e08d" /><path d="M11 5h5M20 4h5" stroke="#7caf5c" strokeWidth="2" />
        <path d="M6 32V21h23v11h-5v-6H12v6z" fill="#8ac7e7" stroke="#579ec4" />
      </svg>
    </TaskButton>
    <TaskButton active className="w-[47px] ml-[2px]"><Earth className="w-7 h-[26px]" /></TaskButton>
    <TaskButton className="w-12 ml-[2px]">
      <svg viewBox="0 0 32 32" className="w-8 h-8" fill="none">
        <rect width="32" height="32" fill="#f4f4ee" />
        <path d="M1 16Q9 3 30 7L27 13Q12 9 5 19z" fill="#467725" />
        <path d="M7 21q7-10 19-7l-2 4q-8-2-13 6z" fill="#77a830" />
        <path d="M13 25q4-6 10-5l-3 6q-3 2-7-1z" fill="#b4ce42" />
      </svg>
    </TaskButton>
    <TaskButton className="w-12 ml-[2px]">
      <svg viewBox="0 0 34 34" className="w-[34px] h-[34px]">
        <path d="M2 21Q3 8 18 7q14 2 12 12-3 13-16 12-4-4-8-3-5-1-4-7z" fill="#d3e8f3" stroke="#72a1bd" strokeWidth="1.500" />
        <circle cx="8" cy="18" r="2.700" fill="#bf656a" /><circle cx="13" cy="12" r="2.700" fill="#6dad67" /><circle cx="19" cy="11" r="2.700" fill="#e3b94d" />
        <circle cx="15" cy="20" r="3" fill="#70b7db" /><path d="M18 30q0-8 5-14l8-13 2 2-6 12q-2 9-9 13z" fill="#d59c57" stroke="#a7743d" />
      </svg>
    </TaskButton>
    <div className="flex-1" />
    {/* Tray */}
    <div className="w-[182px] h-[38px] mr-[2px] shrink-0 flex items-center border border-t-[#808078] border-l-[#808078] border-r-white border-b-white pl-[5px]">
      <svg viewBox="0 0 8 10" className="w-2 h-[10px] mb-1" fill="none" stroke="#000" strokeWidth="1.500"><path d="M1 4l3-3 3 3M1 9l3-3 3 3" /></svg>
      <svg viewBox="0 0 18 18" className="w-[18px] h-[18px] ml-2" fill="none" stroke="#77776f">
        <path d="M1 6h3l4-4v14l-4-4H1z" fill="#fafafa" /><path d="M10 6q2 3 0 6M12 4q4 5 0 10M14 2q5 7 0 14" />
      </svg>
      <svg viewBox="0 0 18 18" className="w-[18px] h-[18px] ml-[7px]" fill="none">
        <path d="M2 2v15" stroke="#70706c" strokeWidth="1.500" /><path d="M3 3h6l1 2h5v7H3z" fill="#fff" stroke="#77776f" />
        <circle cx="11" cy="12" r="5" fill="#cf4645" /><path d="M9 10l4 4M13 10l-4 4" stroke="#fff" strokeWidth="1.500" />
      </svg>
      <svg viewBox="0 0 18 16" className="w-[18px] h-4 ml-[6px]" fill="#fff" stroke="#77776f">
        <path d="M1 12h2v3H1zM4 10h2v5H4zM8 7h2v8H8zM11 4h2v11h-2zM14 1h3v14h-3z" />
      </svg>
      <div className="ml-[10px] w-[60px] text-center text-[11px] leading-4 tracking-[-0.2px] whitespace-nowrap text-[#151515]">
        <div>10:30 PM</div>
        <div>22/04/2017</div>
      </div>
      <svg viewBox="0 0 16 14" className="w-4 h-[14px] ml-[5px]">
        <path d="M1 1h14v9H1z" fill="#1e5ba7" stroke="#8fa0b2" /><path d="M1 8l14-6v2L4 10z" fill="#53a0df" /><path d="M5 11h7v2H5z" fill="#505866" />
      </svg>
    </div>
  </div>
);

const App = () => {
  return (
    <div className="w-[1024px] h-[768px] overflow-hidden flex flex-col bg-[#d4d0c8] font-['DejaVu_Sans_Condensed','DejaVu_Sans',sans-serif] [font-stretch:condensed]">
      <div className="h-[690px] shrink-0 flex flex-col pt-1 pl-[5px] pr-[3px] border-r-2 border-[#4a4a4c]">
        <div className="w-[1014px] flex flex-col">
          <TitleBar />
          <MenuBar />
          <TopToolbars />
          <div className="h-[538px] shrink-0 flex">
            <ScrollTrack />
            <Viewport />
            <RightPanel />
          </div>
          <BottomToolbar />
        </div>
      </div>
      <div className="shrink-0 pr-[3px] border-r-2 border-[#4a4a4c]"><StatusRow /></div>
      <Taskbar />
    </div>
  );
};

export default App;
